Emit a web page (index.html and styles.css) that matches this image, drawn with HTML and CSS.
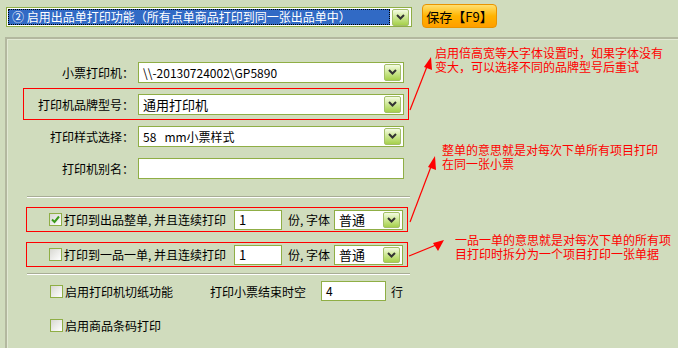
FILE: index.html
```html
<!DOCTYPE html>
<html lang="zh-CN">
<head>
    <meta charset="UTF-8">
    <title>打印设置</title>
    <link rel="stylesheet" href="styles.css">
</head>
<body>
    <div class="topbar">
        <div class="select select-main">
            <span class="select-value">② 启用出品单打印功能（所有点单商品打印到同一张出品单中）</span>
            <span class="drop"><svg width="11" height="8" viewBox="0 0 11 8"><path d="M2 2 L5.5 5.5 L9 2" fill="none" stroke="#333" stroke-width="2"/></svg></span>
        </div>
        <button class="save">保存【F9】</button>
    </div>

    <div class="panel">
        <div class="fields">
            <div class="field">
                <label>小票打印机：</label>
                <div class="select">
                    <span class="select-value">\\-20130724002\GP5890</span>
                    <span class="drop"><svg width="11" height="8" viewBox="0 0 11 8"><path d="M2 2 L5.5 5.5 L9 2" fill="none" stroke="#333" stroke-width="2"/></svg></span>
                </div>
            </div>
            <div class="field mark">
                <label>打印机品牌型号：</label>
                <div class="select">
                    <span class="select-value big">通用打印机</span>
                    <span class="drop"><svg width="11" height="8" viewBox="0 0 11 8"><path d="M2 2 L5.5 5.5 L9 2" fill="none" stroke="#333" stroke-width="2"/></svg></span>
                </div>
            </div>
            <div class="field">
                <label>打印样式选择：</label>
                <div class="select">
                    <span class="select-value">58&nbsp;&nbsp; mm小票样式</span>
                    <span class="drop"><svg width="11" height="8" viewBox="0 0 11 8"><path d="M2 2 L5.5 5.5 L9 2" fill="none" stroke="#333" stroke-width="2"/></svg></span>
                </div>
            </div>
            <div class="field">
                <label>打印机别名：</label>
                <div class="text"></div>
            </div>
        </div>

        <div class="sep"></div>

        <div class="check-row mark">
            <span class="checkbox checked"><svg width="11" height="11" viewBox="0 0 11 11"><path d="M2 5.5 L4.5 8 L9 2.5" fill="none" stroke="#3a9a1a" stroke-width="2"/></svg></span>
            <span class="check-text">打印到出品整单, 并且连续打印</span>
            <div class="text small">1</div>
            <span class="unit">份, 字体</span>
            <div class="select font-select">
                <span class="select-value big">普通</span>
                <span class="drop"><svg width="11" height="8" viewBox="0 0 11 8"><path d="M2 2 L5.5 5.5 L9 2" fill="none" stroke="#333" stroke-width="2"/></svg></span>
            </div>
        </div>
        <div class="check-row mark second">
            <span class="checkbox"></span>
            <span class="check-text">打印到一品一单, 并且连续打印</span>
            <div class="text small">1</div>
            <span class="unit">份, 字体</span>
            <div class="select font-select">
                <span class="select-value big">普通</span>
                <span class="drop"><svg width="11" height="8" viewBox="0 0 11 8"><path d="M2 2 L5.5 5.5 L9 2" fill="none" stroke="#333" stroke-width="2"/></svg></span>
            </div>
        </div>

        <div class="sep sep-bottom"></div>

        <div class="opt-row">
            <span class="checkbox"></span>
            <span class="opt-text">启用打印机切纸功能</span>
            <span class="blank-label">打印小票结束时空</span>
            <div class="text blank">4</div>
            <span class="line-unit">行</span>
        </div>
        <div class="opt-row second">
            <span class="checkbox"></span>
            <span class="opt-text">启用商品条码打印</span>
        </div>
    </div>

    <!-- notes and arrows drawn over the form -->
    <svg class="arrows" width="678" height="348" viewBox="0 0 678 348">
        <g stroke="#f00" stroke-width="1.2" fill="none">
            <line x1="410" y1="110" x2="428" y2="64"/>
            <line x1="410" y1="222" x2="432" y2="164"/>
            <line x1="409" y1="256" x2="436" y2="245"/>
        </g>
        <g fill="#f00">
            <polygon points="431,57 424,67 432,70"/>
            <polygon points="435,156 428,167 436,170"/>
            <polygon points="444,240 433,243 438,251"/>
        </g>
    </svg>
    <div class="note note-1">启用倍高宽等大字体设置时，如果字体没有<br>变大，可以选择不同的品牌型号后重试</div>
    <div class="note note-2">整单的意思就是对每次下单所有项目打印<br>在同一张小票</div>
    <div class="note note-3">一品一单的意思就是对每次下单的所有项<br>目打印时拆分为一个项目打印一张单据</div>
</body>
</html>
```

FILE: styles.css
```css
body {
    margin: 0;
    width: 678px;
    height: 348px;
    overflow: hidden;
    position: relative;
    background-color: #d0dcbd;
    font-family: "Noto Sans CJK SC", sans-serif;
    font-size: 12px;
    color: #000;
}
.topbar {
    display: flex;
    align-items: flex-start;
    height: 37px;
    padding-left: 6px;
    box-sizing: border-box;
}
.select {
    display: flex;
    align-items: center;
    box-sizing: border-box;
    border: 1px solid #8fae45;
    background-color: #fff;
    padding: 1px 2px 1px 1px;
}
.select-value {
    flex: 1;
    padding-left: 3px;
    white-space: nowrap;
    line-height: 17px;
}
.select-value.big {
    font-size: 13px;
}
.drop {
    width: 15px;
    height: 15px;
    margin-left: 2px;
    border: 1px solid #a4bf68;
    border-radius: 2px;
    background: linear-gradient(#f4fbe2, #c8e58a 55%, #a6d04c);
    display: flex;
    align-items: center;
    justify-content: center;
    flex-shrink: 0;
}
.select-main {
    margin-top: 7px;
    width: 406px;
    height: 20px;
}
.select-main .select-value {
    background-color: #316ac5;
    color: #fff;
    border: 1px dotted #fff;
    outline: 1px dotted #000;
    outline-offset: -1px;
    line-height: 14px;
    height: 14px;
}
.save {
    margin-left: 10px;
    margin-top: 4px;
    width: 75px;
    height: 24px;
    padding: 0;
    border: 1px solid #e99400;
    border-radius: 4px;
    background: linear-gradient(#ffe070, #ffb400 50%, #ff9e00);
    font-family: "Noto Sans CJK SC", sans-serif;
    font-size: 13px;
    color: #000;
}
.panel {
    margin-left: 5px;
    height: 311px;
    box-sizing: border-box;
    border-top: 2px solid #b3b89f;
    border-left: 2px solid #b3b89f;
    box-shadow: inset 1px 1px 0 #e2e9d4;
}
.fields {
    padding-top: 17px;
}
.field {
    display: flex;
    align-items: center;
    margin-left: 16px;
    width: 386px;
    height: 32px;
    box-sizing: border-box;
    border: 1px solid transparent;
}
.field label {
    width: 110px;
    margin-right: 4px;
    text-align: right;
    white-space: nowrap;
}
.field .select,
.field .text {
    width: 266px;
    height: 21px;
}
.text {
    box-sizing: border-box;
    border: 1px solid #8fae45;
    background-color: #fff;
    padding-left: 4px;
    line-height: 18px;
}
.sep {
    margin: 12px 0 0 20px;
    width: 383px;
    border-top: 1px solid #a8ad96;
    border-bottom: 1px solid #fff;
}
.sep-bottom {
    margin-top: 6px;
}
.check-row {
    display: flex;
    align-items: center;
    margin: 9px 0 0 19px;
    width: 382px;
    height: 25px;
    box-sizing: border-box;
    border: 1px solid transparent;
    padding-left: 22px;
}
.check-row.second {
    margin-top: 10px;
}
.mark {
    border-color: #f00;
}
.checkbox {
    width: 13px;
    height: 13px;
    box-sizing: border-box;
    border: 1px solid #8fae45;
    background: linear-gradient(135deg, #d8d8d2, #fff);
    display: flex;
    align-items: center;
    justify-content: center;
    flex-shrink: 0;
}
.check-text {
    width: 170px;
    margin-left: 2px;
    white-space: nowrap;
}
.text.small {
    width: 48px;
    height: 20px;
    font-size: 13px;
    flex-shrink: 0;
}
.unit {
    width: 52px;
    padding-left: 6px;
    box-sizing: border-box;
    white-space: nowrap;
    flex-shrink: 0;
}
.font-select {
    width: 69px;
    height: 20px;
    flex-shrink: 0;
}
.font-select .drop {
    height: 14px;
}
.opt-row {
    display: flex;
    align-items: center;
    height: 20px;
    margin-top: 6px;
    padding-left: 43px;
}
.opt-row.second {
    margin-top: 14px;
}
.opt-text {
    width: 145px;
    margin-left: 2px;
    white-space: nowrap;
}
.blank-label {
    width: 111px;
    white-space: nowrap;
}
.text.blank {
    width: 65px;
    height: 20px;
}
.line-unit {
    margin-left: 5px;
}
.arrows {
    position: absolute;
    left: 0;
    top: 0;
    pointer-events: none;
}
.note {
    position: absolute;
    color: #f00;
    line-height: 14px;
    white-space: nowrap;
}
.note-1 {
    left: 435px;
    top: 46px;
}
.note-2 {
    left: 442px;
    top: 143px;
}
.note-3 {
    left: 455px;
    top: 233px;
}
```
